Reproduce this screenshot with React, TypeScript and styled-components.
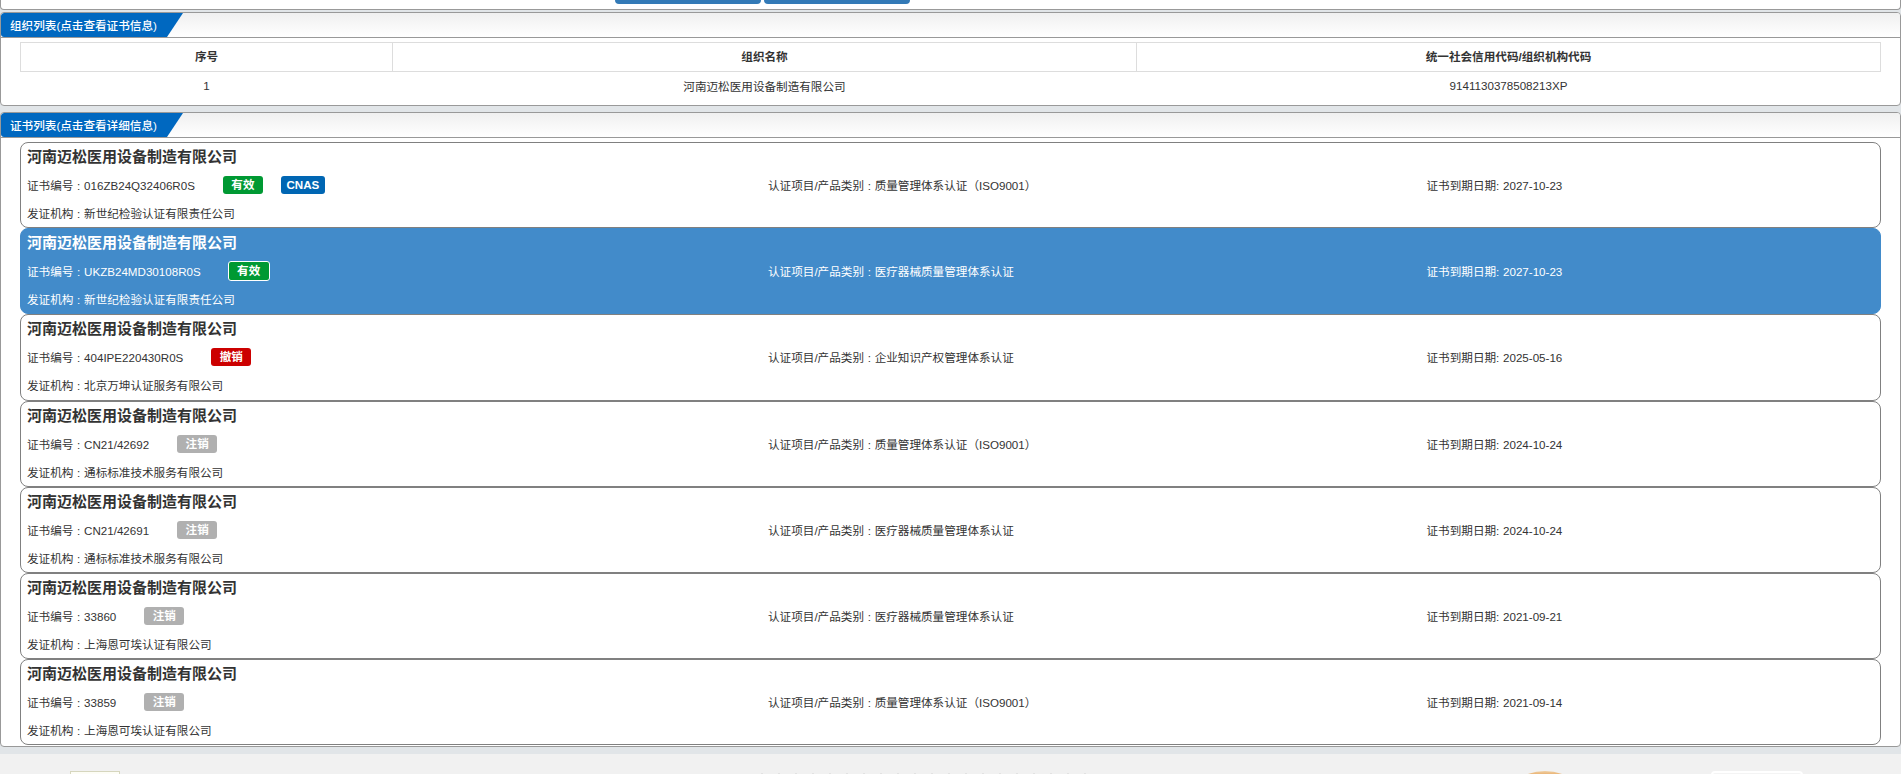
import styled, { createGlobalStyle } from 'styled-components';

const GlobalStyle = createGlobalStyle`
  html, body {
    margin: 0;
    padding: 0;
    height: 774px;
    overflow: hidden;
    background-color: #ffffff;
  }
  body {
    font-family: "Liberation Sans", "Noto Sans CJK SC", sans-serif;
    font-size: 11.6px;
    color: #333333;
  }
  * {
    box-sizing: border-box;
  }
`;

const Page = styled.div`
  width: 1901px;
  height: 774px;
  overflow: hidden;
  display: flex;
  flex-direction: column;
  background-color: #e1e5e8;
`;

const TopPanel = styled.div`
  height: 10px;
  flex: none;
  background: #ffffff;
  border: 1px solid #999999;
  border-top: none;
  border-radius: 0 0 4px 4px;
  display: flex;
  align-items: flex-start;
  gap: 3px;
  padding-left: 614px;
`;

const TopButton = styled.div`
  width: 146px;
  height: 4px;
  background: #337ab7;
  border-radius: 0 0 4px 4px;
`;

const Panel = styled.section<{ $height: number; $top: number }>`
  height: ${(p) => p.$height}px;
  flex: none;
  margin-top: ${(p) => p.$top}px;
  background: #ffffff;
  border: 1px solid #999999;
  border-radius: 4px;
  overflow: hidden;
`;

const PanelHeader = styled.div`
  height: 25px;
  background: linear-gradient(to bottom, #f0f0f0, #ffffff);
  border-bottom: 1px solid #999999;
  display: flex;
`;

const PanelTitle = styled.h3`
  margin: 0;
  width: 182px;
  height: 24px;
  padding-left: 9px;
  background: #0068c0;
  clip-path: polygon(0 0, 100% 0, 166px 100%, 0 100%);
  border-radius: 3px 0 0 3px;
  color: #ffffff;
  font-size: 11.6px;
  font-weight: 500;
  line-height: 26px;
`;

const TableWrap = styled.div`
  padding: 4px 19px 0;
`;

const Table = styled.table`
  width: 100%;
  table-layout: fixed;
  border-collapse: collapse;
`;

const HeadCell = styled.th`
  height: 29px;
  padding: 0 0 2px;
  border: 1px solid #dddddd;
  font-size: 11.6px;
  font-weight: bold;
  text-align: center;
`;

const BodyCell = styled.td`
  height: 29px;
  padding: 0 0 1px;
  font-size: 11.6px;
  text-align: center;
`;

const CardList = styled.div`
  padding: 4px 19px 0;
`;

const Card = styled.div<{ $active?: boolean }>`
  height: 86.2px;
  padding: 0 6px;
  border: 1px solid ${(p) => (p.$active ? '#428bca' : '#808080')};
  border-radius: 8px;
  background: ${(p) => (p.$active ? '#428bca' : '#ffffff')};
  color: ${(p) => (p.$active ? '#ffffff' : '#333333')};
  word-spacing: 0.5px;
`;

const CardTitle = styled.div`
  height: 27px;
  font-size: 15px;
  font-weight: bold;
  line-height: 27px;
`;

const InfoRow = styled.div`
  height: 30px;
  display: grid;
  grid-template-columns: 741px 658.5px 1fr;
  align-items: center;
`;

const CertNo = styled.div`
  display: flex;
  align-items: center;
`;

const Badge = styled.span<{ $bg: string; $ring?: boolean; $gap: number; $wide?: boolean }>`
  margin-left: ${(p) => p.$gap}px;
  width: ${(p) => (p.$ring ? 42 : p.$wide ? 44 : 40)}px;
  height: ${(p) => (p.$ring ? 20 : 18)}px;
  border-radius: 3px;
  background: ${(p) => p.$bg};
  border: ${(p) => (p.$ring ? '1px solid #ffffff' : 'none')};
  color: #ffffff;
  font-size: 11.6px;
  font-weight: bold;
  line-height: 18px;
  text-align: center;
`;

const IssuerRow = styled.div`
  height: 28px;
  line-height: 28px;
`;

const Footer = styled.footer`
  flex: 1;
  margin-top: 7px;
  background: #f1f1f1;
  display: flex;
  align-items: flex-start;
  padding-top: 17px;
`;

const FooterBox = styled.div`
  width: 50px;
  height: 60px;
  flex: none;
  margin-left: 70px;
  border: 1px solid #d6d6be;
  background: #fdfdf6;
`;

const FooterText = styled.div`
  width: 334px;
  height: 1px;
  flex: none;
  margin: 2px 0 0 641px;
  background: repeating-linear-gradient(to right, #e2e2e2 0 2px, transparent 2px 17px);
`;

const FooterSeal = styled.div`
  width: 100px;
  height: 100px;
  flex: none;
  margin-left: 400px;
  border-radius: 50%;
  background: linear-gradient(to bottom, #f0d0a4, #e8ac68 4px);
`;

const FooterQr = styled.div`
  width: 92px;
  height: 60px;
  flex: none;
  margin-left: 116px;
  border: 2px solid #ffffff;
  border-radius: 4px;
  background: #f4f4f4;
`;

const GREEN = '#009933';
const BLUE = '#0066b3';
const RED = '#cc0000';
const GREY = '#b0b0b0';

const certs = [
  { no: '016ZB24Q32406R0S', status: '有效', color: GREEN, cnas: true, item: '质量管理体系认证（ISO9001）', date: '2027-10-23', org: '新世纪检验认证有限责任公司' },
  { no: 'UKZB24MD30108R0S', status: '有效', color: GREEN, active: true, item: '医疗器械质量管理体系认证', date: '2027-10-23', org: '新世纪检验认证有限责任公司' },
  { no: '404IPE220430R0S', status: '撤销', color: RED, item: '企业知识产权管理体系认证', date: '2025-05-16', org: '北京万坤认证服务有限公司' },
  { no: 'CN21/42692', status: '注销', color: GREY, item: '质量管理体系认证（ISO9001）', date: '2024-10-24', org: '通标标准技术服务有限公司' },
  { no: 'CN21/42691', status: '注销', color: GREY, item: '医疗器械质量管理体系认证', date: '2024-10-24', org: '通标标准技术服务有限公司' },
  { no: '33860', status: '注销', color: GREY, item: '医疗器械质量管理体系认证', date: '2021-09-21', org: '上海恩可埃认证有限公司' },
  { no: '33859', status: '注销', color: GREY, item: '质量管理体系认证（ISO9001）', date: '2021-09-14', org: '上海恩可埃认证有限公司' },
];

export default function App() {
  return (
    <Page>
      <GlobalStyle />
      <TopPanel>
        <TopButton />
        <TopButton />
      </TopPanel>

      <Panel $height={94} $top={2}>
        <PanelHeader>
          <PanelTitle>组织列表(点击查看证书信息)</PanelTitle>
        </PanelHeader>
        <TableWrap>
          <Table>
            <colgroup>
              <col style={{ width: 372 }} />
              <col style={{ width: 744 }} />
              <col />
            </colgroup>
            <thead>
              <tr>
                <HeadCell>序号</HeadCell>
                <HeadCell>组织名称</HeadCell>
                <HeadCell>统一社会信用代码/组织机构代码</HeadCell>
              </tr>
            </thead>
            <tbody>
              <tr>
                <BodyCell>1</BodyCell>
                <BodyCell>河南迈松医用设备制造有限公司</BodyCell>
                <BodyCell>9141130378508213XP</BodyCell>
              </tr>
            </tbody>
          </Table>
        </TableWrap>
      </Panel>

      <Panel $height={635} $top={6}>
        <PanelHeader>
          <PanelTitle>证书列表(点击查看详细信息)</PanelTitle>
        </PanelHeader>
        <CardList>
          {certs.map((c) => (
            <Card key={c.no} $active={c.active}>
              <CardTitle>河南迈松医用设备制造有限公司</CardTitle>
              <InfoRow>
                <CertNo>
                  证书编号 : {c.no}
                  <Badge $bg={c.color} $ring={c.active} $gap={c.active ? 27 : 28}>{c.status}</Badge>
                  {c.cnas && <Badge $bg={BLUE} $gap={18} $wide>CNAS</Badge>}
                </CertNo>
                <div>认证项目/产品类别 : {c.item}</div>
                <div>证书到期日期: {c.date}</div>
              </InfoRow>
              <IssuerRow>发证机构 : {c.org}</IssuerRow>
            </Card>
          ))}
        </CardList>
      </Panel>

      <Footer>
        <FooterBox />
        <FooterText />
        <FooterSeal />
        <FooterQr />
      </Footer>
    </Page>
  );
}
